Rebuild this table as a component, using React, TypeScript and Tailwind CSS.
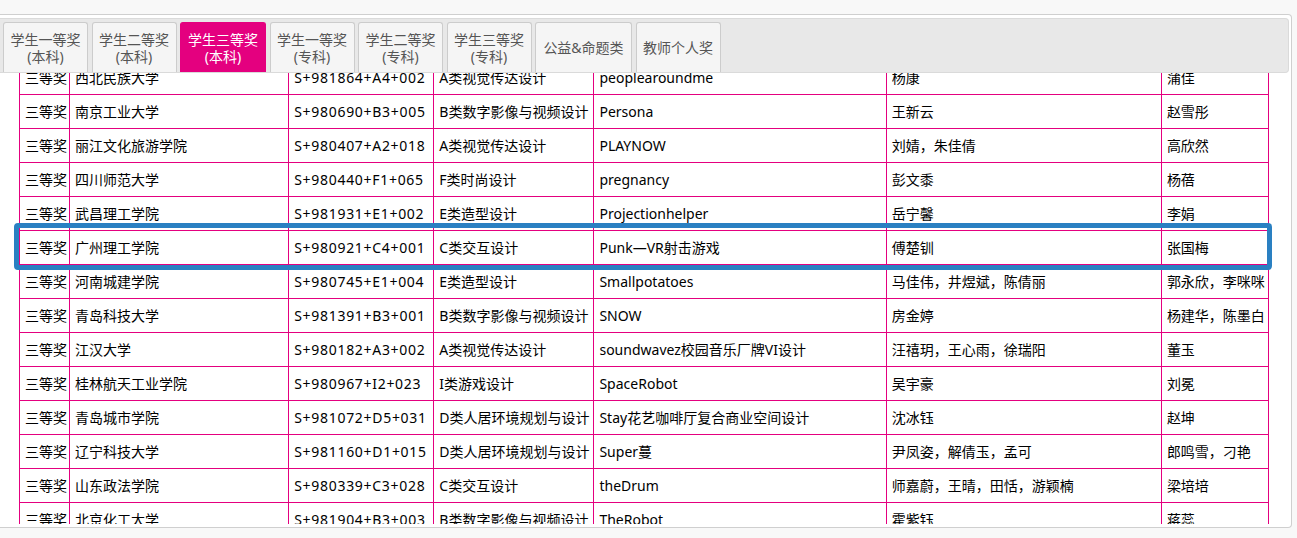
import React from "react";

const tabs: { l1: string; l2?: string; active?: boolean; w: string }[] = [
  { l1: "学生一等奖", l2: "(本科)", w: "w-[85px]" },
  { l1: "学生二等奖", l2: "(本科)", w: "w-[85px]" },
  { l1: "学生三等奖", l2: "(本科)", active: true, w: "w-[86px]" },
  { l1: "学生一等奖", l2: "(专科)", w: "w-[85px]" },
  { l1: "学生二等奖", l2: "(专科)", w: "w-[85px]" },
  { l1: "学生三等奖", l2: "(专科)", w: "w-[85px]" },
  { l1: "公益&命题类", w: "w-[97px]" },
  { l1: "教师个人奖", w: "w-[85px]" },
];

const rows: string[][] = [
  ["三等奖", "西北民族大学", "S+981864+A4+002", "A类视觉传达设计", "peoplearoundme", "杨康", "蒲佳"],
  ["三等奖", "南京工业大学", "S+980690+B3+005", "B类数字影像与视频设计", "Persona", "王新云", "赵雪彤"],
  ["三等奖", "丽江文化旅游学院", "S+980407+A2+018", "A类视觉传达设计", "PLAYNOW", "刘婧，朱佳倩", "高欣然"],
  ["三等奖", "四川师范大学", "S+980440+F1+065", "F类时尚设计", "pregnancy", "彭文黍", "杨蓓"],
  ["三等奖", "武昌理工学院", "S+981931+E1+002", "E类造型设计", "Projectionhelper", "岳宁馨", "李娟"],
  ["三等奖", "广州理工学院", "S+980921+C4+001", "C类交互设计", "Punk—VR射击游戏", "傅楚钏", "张国梅"],
  ["三等奖", "河南城建学院", "S+980745+E1+004", "E类造型设计", "Smallpotatoes", "马佳伟，井煜斌，陈倩丽", "郭永欣，李咪咪"],
  ["三等奖", "青岛科技大学", "S+981391+B3+001", "B类数字影像与视频设计", "SNOW", "房金婷", "杨建华，陈墨白"],
  ["三等奖", "江汉大学", "S+980182+A3+002", "A类视觉传达设计", "soundwavez校园音乐厂牌VI设计", "汪禧玥，王心雨，徐瑞阳", "董玉"],
  ["三等奖", "桂林航天工业学院", "S+980967+I2+023", "I类游戏设计", "SpaceRobot", "吴宇豪", "刘冕"],
  ["三等奖", "青岛城市学院", "S+981072+D5+031", "D类人居环境规划与设计", "Stay花艺咖啡厅复合商业空间设计", "沈冰钰", "赵坤"],
  ["三等奖", "辽宁科技大学", "S+981160+D1+015", "D类人居环境规划与设计", "Super蔓", "尹凤姿，解倩玉，孟可", "郎鸣雪，刁艳"],
  ["三等奖", "山东政法学院", "S+980339+C3+028", "C类交互设计", "theDrum", "师嘉蔚，王晴，田恬，游颖楠", "梁培培"],
  ["三等奖", "北京化工大学", "S+981904+B3+003", "B类数字影像与视频设计", "TheRobot", "霍紫钰", "蒋蕊"],
];

const colWidths = ["w-[50px]", "w-[219px]", "w-[145px]", "w-[160px]", "w-[292px]", "w-[275px]", "w-[107px]"];

export default function App() {
  return (
    <div
      className="relative w-[1297px] h-[538px] bg-[#f8f8f8] pt-[14px] overflow-hidden"
      style={{ fontFamily: '"Noto Sans", "Noto Sans CJK SC", sans-serif' }}
    >
      <div className="w-[1292px] h-[514px] bg-white border-y border-r border-[#cfcfcf] rounded-r-[4px] pt-[3px] pr-[2px] pb-[3px] flex flex-col">
        <div className="h-[55px] shrink-0 bg-[#e8e8e8] border-y border-r border-[#dadada] rounded-r-[4px] flex items-end gap-[3.5px] pl-[3px] relative z-10">
          {tabs.map((t, i) => (
            <div
              key={i}
              className={
                t.w +
                " h-[50px] border border-b-0 rounded-t-[3px] flex flex-col items-center justify-center text-[14px] leading-[17px] whitespace-nowrap " +
                (t.active
                  ? "bg-[#e4007f] border-[#e4007f] text-white"
                  : "bg-[#f5f5f5] border-[#cccccc] text-[#555555]")
              }
            >
              <span>{t.l1}</span>
              {t.l2 && <span>{t.l2}</span>}
            </div>
          ))}
        </div>
        <div className="flex-1 overflow-hidden pl-[19px]">
          <table className="table-fixed border-collapse w-[1250px] -mt-[13px] text-[14px] text-[#000000]">
            <colgroup>
              {colWidths.map((w, i) => (
                <col key={i} className={w} />
              ))}
            </colgroup>
            <tbody>
              {rows.map((r, i) => (
                <tr key={i} className="h-[34px]">
                  {r.map((c, j) => (
                    <td
                      key={j}
                      className={
                        "border border-[#e4007f] px-[5px] py-0 align-middle whitespace-nowrap leading-[20px] " +
                        (j === 2 ? "tracking-[0.7px]" : "")
                      }
                    >
                      {c}
                    </td>
                  ))}
                </tr>
              ))}
            </tbody>
          </table>
        </div>
      </div>
      <div className="absolute left-[14px] top-[223px] w-[1258px] h-[47px] border-[5px] border-[#2a80c2] rounded-[4px] pointer-events-none" />
    </div>
  );
}
